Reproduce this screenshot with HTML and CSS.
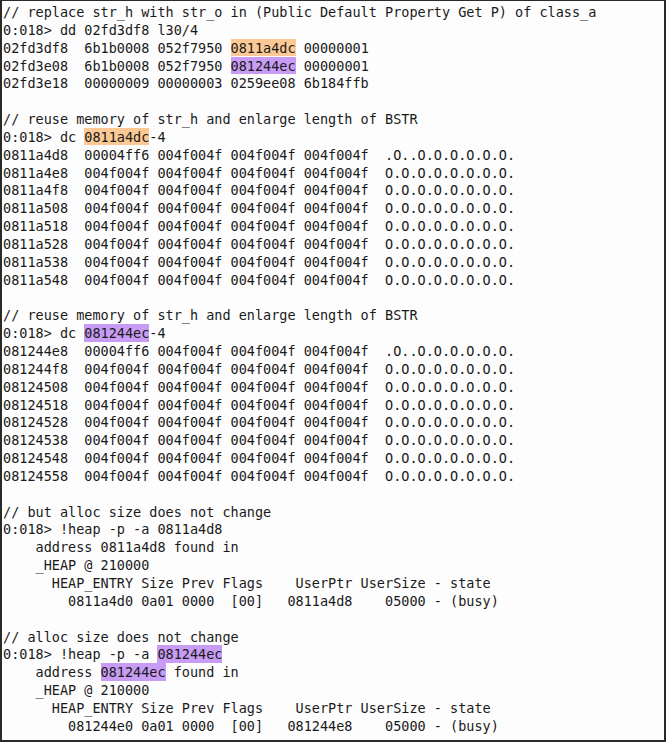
FILE: index.html
```html
<!DOCTYPE html>
<html>
<head>
<meta charset="utf-8">
<link rel="stylesheet" href="styles.css">
</head>
<body>
<div class="frame"><pre class="code">// replace str_h with str_o in (Public Default Property Get P) of class_a
0:018&gt; dd 02fd3df8 l30/4
02fd3df8  6b1b0008 052f7950 <span class="hl-o">0811a4dc</span> 00000001
02fd3e08  6b1b0008 052f7950 <span class="hl-p">081244ec</span> 00000001
02fd3e18  00000009 00000003 0259ee08 6b184ffb

// reuse memory of str_h and enlarge length of BSTR
0:018&gt; dc <span class="hl-o">0811a4dc</span>-4
0811a4d8  00004ff6 004f004f 004f004f 004f004f  .O..O.O.O.O.O.O.
0811a4e8  004f004f 004f004f 004f004f 004f004f  O.O.O.O.O.O.O.O.
0811a4f8  004f004f 004f004f 004f004f 004f004f  O.O.O.O.O.O.O.O.
0811a508  004f004f 004f004f 004f004f 004f004f  O.O.O.O.O.O.O.O.
0811a518  004f004f 004f004f 004f004f 004f004f  O.O.O.O.O.O.O.O.
0811a528  004f004f 004f004f 004f004f 004f004f  O.O.O.O.O.O.O.O.
0811a538  004f004f 004f004f 004f004f 004f004f  O.O.O.O.O.O.O.O.
0811a548  004f004f 004f004f 004f004f 004f004f  O.O.O.O.O.O.O.O.

// reuse memory of str_h and enlarge length of BSTR
0:018&gt; dc <span class="hl-p">081244ec</span>-4
081244e8  00004ff6 004f004f 004f004f 004f004f  .O..O.O.O.O.O.O.
081244f8  004f004f 004f004f 004f004f 004f004f  O.O.O.O.O.O.O.O.
08124508  004f004f 004f004f 004f004f 004f004f  O.O.O.O.O.O.O.O.
08124518  004f004f 004f004f 004f004f 004f004f  O.O.O.O.O.O.O.O.
08124528  004f004f 004f004f 004f004f 004f004f  O.O.O.O.O.O.O.O.
08124538  004f004f 004f004f 004f004f 004f004f  O.O.O.O.O.O.O.O.
08124548  004f004f 004f004f 004f004f 004f004f  O.O.O.O.O.O.O.O.
08124558  004f004f 004f004f 004f004f 004f004f  O.O.O.O.O.O.O.O.

// but alloc size does not change
0:018&gt; !heap -p -a 0811a4d8
    address 0811a4d8 found in
    _HEAP @ 210000
      HEAP_ENTRY Size Prev Flags    UserPtr UserSize - state
        0811a4d0 0a01 0000  [00]   0811a4d8    05000 - (busy)

// alloc size does not change
0:018&gt; !heap -p -a <span class="hl-p">081244ec</span>
    address <span class="hl-p">081244ec</span> found in
    _HEAP @ 210000
      HEAP_ENTRY Size Prev Flags    UserPtr UserSize - state
        081244e0 0a01 0000  [00]   081244e8    05000 - (busy)</pre></div>
</body>
</html>
```
FILE: styles.css
```css
html, body {
  margin: 0;
  padding: 0;
  background: #ffffff;
}

.frame {
  box-sizing: border-box;
  width: 666px;
  height: 742px;
  background: #fdfdfd;
  border-top: 1px solid #2a2a2a;
  border-left: 2px solid #2a2a2a;
  border-right: 2px solid #2a2a2a;
  border-bottom: 2px solid #2a2a2a;
  padding: 3px 0 0 1px;
  overflow: hidden;
}

.code {
  margin: 0;
  font-family: "DejaVu Sans Mono", "Liberation Mono", monospace;
  font-size: 13.5px;
  line-height: 17.85px;
  color: #1a1a1a;
  white-space: pre;
}

.hl-o,
.hl-p {
  padding: 1px 0 0.5px;
}

.hl-o {
  background: #fcc994;
}

.hl-p {
  background: #c89cf4;
}
```
